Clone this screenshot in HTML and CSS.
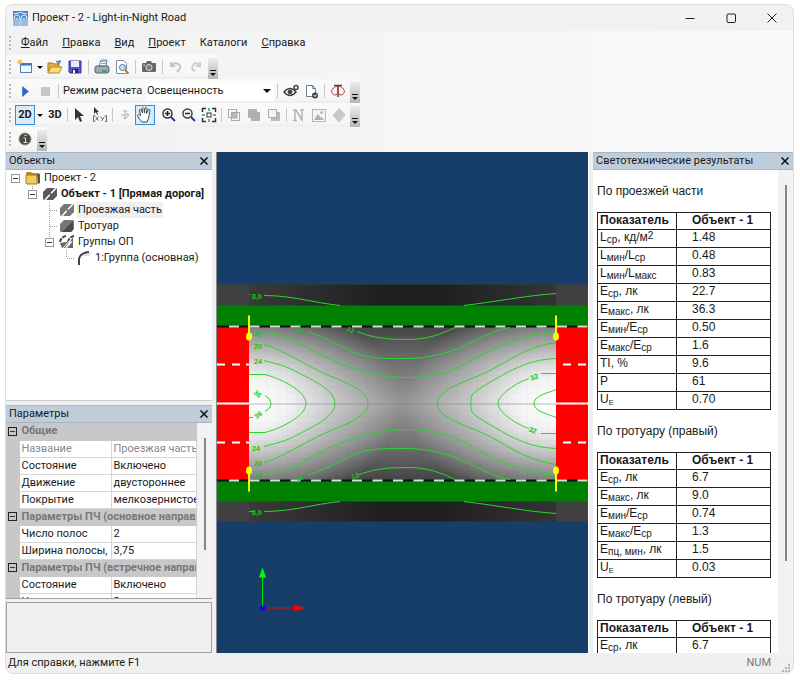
FILE: index.html
```html
<!DOCTYPE html>
<html lang="ru">
<head>
  <meta charset="UTF-8">
  <meta name="viewport" content="width=device-width, initial-scale=1.0">
  <title>Проект - 2 - Light-in-Night Road</title>
  <link rel="stylesheet" href="styles.css">
</head>
<body>
  <div class="window">
    <header class="titlebar">
      <svg class="app-icon" width="15" height="15" viewBox="0 0 15 15"><rect width="15" height="15" fill="#4d86c6"/><path d="M1 15V8q0-4 3-4t3 4v7M3 15V9q0-2 1-2t1 2v6M8 15V8q0-4 3-4t3 4v7M10 15V9q0-2 1-2t1 2v6M1 3q6-3 13 0" fill="none" stroke="#e8f2ff"/></svg>
      <span class="title">Проект - 2 - Light-in-Night Road</span>
      <button class="win-btn" aria-label="Свернуть"><svg width="12" height="12" viewBox="0 0 12 12"><path d="M1.500 6.500h9"/></svg></button>
      <button class="win-btn" aria-label="Развернуть"><svg width="12" height="12" viewBox="0 0 12 12"><rect x="2" y="2" width="8.500" height="8.500" rx="1"/></svg></button>
      <button class="win-btn" aria-label="Закрыть"><svg width="12" height="12" viewBox="0 0 12 12"><path d="M1.500 1.500l9 9M10.500 1.500l-9 9"/></svg></button>
    </header>

    <nav class="menubar">
      <span class="grip"></span>
      <button><u>Ф</u>айл</button>
      <button><u>П</u>равка</button>
      <button><u>В</u>ид</button>
      <button><u>П</u>роект</button>
      <button>Каталоги</button>
      <button><u>С</u>правка</button>
    </nav>

    <div class="toolbars">
      <div class="toolbar">
        <span class="grip"></span>
        <button class="tool" aria-label="Создать"><svg width="16" height="16" viewBox="0 0 16 16"><rect x="3.500" y="4.500" width="11" height="9" fill="#eef5fc" stroke="#4a7fb5"/><path d="M3 5.500h12" stroke="#3a75b8" stroke-width="2"/><path d="M3 0v6M0 3h6M1 1l4 4M5 1L1 5" stroke="#f0bd2c"/></svg></button>
        <button class="drop" aria-label="Варианты создания"></button>
        <button class="tool" aria-label="Открыть"><svg width="16" height="16" viewBox="0 0 16 16"><path d="M1 14V4h5l1 1h5v3" fill="#e0b040" stroke="#a87b1c"/><path d="M1 14l3-6h11l-3 6z" fill="#fbdc77" stroke="#b58a24"/><path d="M9 3q2-2 4 0M13 1v3h-3" fill="none" stroke="#2d5e98"/></svg></button>
        <button class="tool" aria-label="Сохранить"><svg width="16" height="16" viewBox="0 0 16 16"><path d="M2 2h12v12H3l-1-1z" fill="#5557c5" stroke="#3838a0"/><rect x="4" y="2" width="8" height="6" fill="#e6ecfb"/><rect x="5" y="10" width="6" height="4" fill="#23237c"/><rect x="6" y="11" width="2" height="3" fill="#fff"/></svg></button>
        <span class="sep"></span>
        <button class="tool" aria-label="Печать"><svg width="16" height="16" viewBox="0 0 16 16"><path d="M5 7l2-6h6l-1 6z" fill="#fff" stroke="#5c83a8"/><path d="M2 7h12l1 2v4l-2 1H2l-1-1V9z" fill="#9ba9b8" stroke="#536578"/><path d="M7 2.500h5M7 4.500h5" stroke="#87a9c8"/><path d="M8 11h5v2H8z" fill="#35b045"/></svg></button>
        <button class="tool" aria-label="Просмотр"><svg width="16" height="16" viewBox="0 0 16 16"><path d="M2.500 1.500h7l3 3v10h-10z" fill="#fff" stroke="#7690a8"/><circle cx="8.500" cy="8.500" r="3" fill="#c4e3f7" stroke="#55768f"/><path d="M11 11l3.500 3.500" stroke="#c07a2f" stroke-width="2"/></svg></button>
        <span class="sep"></span>
        <button class="tool" aria-label="Снимок"><svg width="16" height="16" viewBox="0 0 16 16"><path d="M1 5q0-1 1-1h3l1-2h4l1 2h3q1 0 1 1v7q0 1-1 1H2q-1 0-1-1z" fill="#666"/><circle cx="8" cy="8.500" r="3" fill="#777" stroke="#ddd"/><path d="M2.500 6h1.500" stroke="#eee"/></svg></button>
        <span class="sep"></span>
        <button class="tool" aria-label="Отменить" disabled><svg width="16" height="16" viewBox="0 0 16 16" fill="none" stroke="#c4c4c4" stroke-width="2"><path d="M3 3v4h4M3 7q3-4 7-2t1 6l-2 2"/></svg></button>
        <button class="tool" aria-label="Вернуть" disabled><svg width="16" height="16" viewBox="0 0 16 16" fill="none" stroke="#cecece" stroke-width="2"><path d="M12 3v4H8M12 7q-3-4-6-2t-1 6l2 1"/></svg></button>
        <button class="overflow" aria-label="Ещё"></button>
      </div>

      <div class="toolbar">
        <span class="grip"></span>
        <button class="tool" aria-label="Рассчитать"><svg width="16" height="16" viewBox="0 0 16 16"><path d="M5.500 3.500l6 5-6 5z" fill="#2867d8" stroke="#1c4ca8" stroke-width=".5"/></svg></button>
        <button class="tool" aria-label="Остановить" disabled><svg width="16" height="16" viewBox="0 0 16 16"><rect x="4" y="4" width="9" height="9" fill="#c6c6c6"/></svg></button>
        <span class="sep"></span>
        <label class="mode-label" for="mode">Режим расчета</label>
        <span class="combo">
          <select id="mode"><option>Освещенность</option></select>
        </span>
        <span class="sep"></span>
        <button class="tool" aria-label="Видимость"><svg width="16" height="16" viewBox="0 0 16 16" fill="none" stroke="#444"><path d="M1 9q6-7 12 0-6 7-12 0z" stroke-width="1.500"/><circle cx="7" cy="9" r="2" fill="#444"/><circle cx="13" cy="4.500" r="2" stroke-width="1.500"/></svg></button>
        <button class="tool" aria-label="Отчёт"><svg width="16" height="16" viewBox="0 0 16 16"><path d="M3.500 2.500h6l3 3v8h-9z" fill="#fff" stroke="#6c7f8f"/><path d="M9.500 2.500v3h3" fill="none" stroke="#6c7f8f"/><circle cx="12" cy="12.500" r="3" fill="#444"/><path d="M10.500 12l1.500 1.500 1.500-2" fill="none" stroke="#fff"/></svg></button>
        <span class="sep"></span>
        <button class="tool" aria-label="Кривая силы света"><svg width="16" height="16" viewBox="0 0 16 16" fill="none"><path d="M4 2.500h8M8 2v12" stroke="#444" stroke-width="1.500"/><path d="M8 3Q2 4 1.500 9q2 4 4.500 3t2-9zq6 1 6.500 6-2 4-4.500 3T8 3z" stroke="#b04848"/></svg></button>
        <button class="overflow" aria-label="Ещё"></button>
      </div>

      <div class="toolbar toolbar-tight">
        <span class="grip"></span>
        <button class="tool tool-text active">2D</button>
        <button class="drop" aria-label="Виды 2D"></button>
        <button class="tool tool-text">3D</button>
        <span class="sep"></span>
        <button class="tool" aria-label="Выбор"><svg width="16" height="16" viewBox="0 0 16 16"><path d="M3 1v12l3-3 2 5 2-1-2-5h4z" fill="#333"/></svg></button>
        <button class="tool" aria-label="Координаты"><svg width="16" height="16" viewBox="0 0 16 16"><path d="M2 0v7l2-2 1 3 1-1-1-2h2z" fill="#333"/><path d="M3 8.500H1.500v6H3M13 8.500h1.500v6H13M3.500 9.500l3 4M6.500 9.500l-3 4M8.500 9.500l2 2.500M12.500 9.500l-3 4.500" fill="none" stroke="#666"/></svg></button>
        <span class="sep"></span>
        <button class="tool" aria-label="Переместить" disabled><svg width="16" height="16" viewBox="0 0 16 16" fill="none" stroke="#b5b5b5"><path d="M8 3v9M6 5l2-2 2 2M6 10l2 2 2-2M4 8h8M10 6l2 2-2 2"/></svg></button>
        <button class="tool active" aria-label="Рука"><svg width="18" height="18" viewBox="0 0 18 18"><path d="M6 16Q3 13 1.500 9.500q1-2 3 0L3.500 4q1-2 2 0L6.500 7 6 2.500q1-2 2 0L8.500 7l.5-5q1.500-1 2 .5L10.500 7.500l2-4q1.500-.5 1.500 1-1 5-1.500 8L11 16z" fill="#fff" stroke="#444"/></svg></button>
        <span class="space"></span>
        <button class="tool" aria-label="Увеличить"><svg width="16" height="16" viewBox="0 0 16 16" fill="none"><circle cx="6.500" cy="6.500" r="4.500" stroke="#333" stroke-width="1.500"/><path d="M4 6.500h5M6.500 4v5" stroke="#222" stroke-width="1.500"/><path d="M10 10l4 4" stroke="#35358a" stroke-width="2"/></svg></button>
        <button class="tool" aria-label="Уменьшить"><svg width="16" height="16" viewBox="0 0 16 16" fill="none"><circle cx="6.500" cy="6.500" r="4.500" stroke="#444" stroke-width="1.500"/><path d="M4 6.500h5" stroke="#222" stroke-width="1.500"/><path d="M10 10l4 4" stroke="#35358a" stroke-width="2"/></svg></button>
        <button class="tool" aria-label="Показать всё"><svg width="16" height="16" viewBox="0 0 16 16" fill="none"><path d="M1.500 5V1.500H5M11 1.500h3.500V5M14.500 11v3.500H11M5 14.500H1.500V11" stroke="#333" stroke-width="1.500"/><rect x="6" y="6" width="4" height="4" stroke="#333"/><path d="M8 1v3M8 12v3M1 8h3M12 8h3" stroke="#2b9576" stroke-width="1.500"/></svg></button>
        <span class="sep"></span>
        <button class="tool" aria-label="Пересечение" disabled><svg width="16" height="16" viewBox="0 0 16 16" fill="none" stroke="#aaa"><rect x="2.500" y="2.500" width="8" height="8"/><rect x="5.500" y="5.500" width="8" height="8"/><path d="M6 6h5v5H6z" fill="#bbb"/></svg></button>
        <button class="tool" aria-label="Объединение" disabled><svg width="16" height="16" viewBox="0 0 16 16"><path d="M2 2h9v3h3v9H5v-3H2z" fill="#b0b0b0"/></svg></button>
        <button class="tool" aria-label="Вычитание" disabled><svg width="16" height="16" viewBox="0 0 16 16"><path d="M5 5h9v9H5z" fill="#bbb"/><path d="M2.500 2.500h8v8h-8z" fill="#f4f4f4" stroke="#aaa"/></svg></button>
        <span class="sep"></span>
        <button class="tool" aria-label="Север" disabled><svg width="16" height="16" viewBox="0 0 16 16" fill="none" stroke="#b4b4b4" stroke-width="1.500"><path d="M2 3h3l6 10V3M4 3v10M2 13.500h4M9 3h4"/></svg></button>
        <button class="tool" aria-label="Изображение" disabled><svg width="16" height="16" viewBox="0 0 16 16"><rect x="1.500" y="2.500" width="13" height="12" fill="#f4f4f4" stroke="#b8b8b8"/><path d="M3 13l4-6 3 4 1-1 2 3z" fill="#b0b0b0"/><circle cx="10.500" cy="5.500" r="1.500" fill="#bbb"/></svg></button>
        <button class="tool" aria-label="Слои" disabled><svg width="16" height="16" viewBox="0 0 16 16"><path d="M8 1l6 6-6 7-6-6z" fill="#c8c8c8"/><path d="M2 8l6 7 6-7" fill="none" stroke="#b4b4b4"/></svg></button>
        <button class="overflow" aria-label="Ещё"></button>
      </div>

      <div class="toolbar">
        <span class="grip"></span>
        <button class="tool" aria-label="Сведения"><svg width="16" height="16" viewBox="0 0 16 16"><circle cx="8" cy="8" r="6" fill="#4a4a45" stroke="#8c8c84"/><path d="M6.500 7h2v4M6.500 11.500h4M7.500 4.500h2" fill="none" stroke="#e0e0d0"/></svg></button>
        <button class="overflow" aria-label="Ещё"></button>
      </div>
    </div>

    <main class="workspace">
      <aside class="left">
        <section class="panel objects">
          <h2 class="panel-head">Объекты <button class="close" aria-label="Закрыть"><svg width="10" height="10" viewBox="0 0 10 10"><path d="M1.500 1.500l7 7M8.500 1.500l-7 7"/></svg></button></h2>
          <ul class="tree">
            <li>
              <div class="node"><button class="expander" aria-label="Свернуть"></button><svg width="16" height="16" viewBox="0 0 16 16"><path d="M1 3l1-1h4l1 1h7v2H1z" fill="#b98b25"/><path d="M1 5h11v9H2l-1-1z" fill="#f2cd5c" stroke="#a3781c"/><path d="M12 4h3v9l-2 1z" fill="#555"/></svg><span>Проект - 2</span></div>
              <ul>
                <li>
                  <div class="node"><button class="expander" aria-label="Свернуть"></button><svg width="16" height="16" viewBox="0 0 16 16"><path d="M1 6l4-4h9l1 1v7l-4 4H2l-1-1z" fill="#5a5a5a"/><path d="M3 14L14 2" stroke="#fff" stroke-width="1.500" stroke-dasharray="7 2"/></svg><span><b>Объект - 1 [Прямая дорога]</b></span></div>
                  <ul>
                    <li><div class="node"><i class="stub"></i><svg width="16" height="16" viewBox="0 0 16 16"><path d="M1 6l4-4h9l1 1v7l-4 4H2l-1-1z" fill="#777"/><path d="M3 14L14 2" stroke="#fff" stroke-width="1.500" stroke-dasharray="7 2"/></svg><span class="selected">Проезжая часть</span></div></li>
                    <li><div class="node"><i class="stub"></i><svg width="16" height="16" viewBox="0 0 16 16"><path d="M1 6l4-4h9l1 1v8l-3 3H2l-1-1z" fill="#777"/><path d="M3 14L14 3v9l-2 2z" fill="#4a4a4a"/></svg><span>Тротуар</span></div></li>
                    <li>
                      <div class="node"><button class="expander" aria-label="Свернуть"></button><svg width="16" height="16" viewBox="0 0 16 16"><path d="M1 9l2 5h3L14 3v11H8l6-7" fill="#666"/><path d="M1 8q1-5 6-6M9 8q1-5 6-6" fill="none" stroke="#444" stroke-width="2" stroke-dasharray="4 1"/><path d="M4 14L13 4" stroke="#fff"/></svg><span>Группы ОП</span></div>
                      <ul>
                        <li><div class="node"><i class="stub"></i><svg width="16" height="16" viewBox="0 0 16 16"><path d="M3 15V9q1-6 10-7" fill="none" stroke="#444" stroke-width="2"/><path d="M7 5q5-2 8-2l-2 3H8z" fill="#cfdcf2"/></svg><span>1:Группа (основная)</span></div></li>
                      </ul>
                    </li>
                  </ul>
                </li>
              </ul>
            </li>
          </ul>
        </section>

        <section class="panel params">
          <h2 class="panel-head">Параметры <button class="close" aria-label="Закрыть"><svg width="10" height="10" viewBox="0 0 10 10"><path d="M1.500 1.500l7 7M8.500 1.500l-7 7"/></svg></button></h2>
          <div class="props-box">
            <table class="props">
              <colgroup><col class="gutter"><col class="prop-name"><col></colgroup>
              <tbody>
                <tr class="group"><td><button class="expander" aria-label="Свернуть"></button></td><th colspan="2">Общие</th></tr>
                <tr class="muted"><td></td><td>Название</td><td>Проезжая часть</td></tr>
                <tr><td></td><td>Состояние</td><td>Включено</td></tr>
                <tr><td></td><td>Движение</td><td>двустороннее</td></tr>
                <tr><td></td><td>Покрытие</td><td>мелкозернистое</td></tr>
                <tr class="group"><td><button class="expander" aria-label="Свернуть"></button></td><th colspan="2">Параметры ПЧ (основное направ.</th></tr>
                <tr><td></td><td>Число полос</td><td>2</td></tr>
                <tr><td></td><td>Ширина полосы,</td><td>3,75</td></tr>
                <tr class="group"><td><button class="expander" aria-label="Свернуть"></button></td><th colspan="2">Параметры ПЧ (встречное направ</th></tr>
                <tr><td></td><td>Состояние</td><td>Включено</td></tr>
                <tr><td></td><td>Число полос</td><td>2</td></tr>
              </tbody>
            </table>
            <div class="scroll props-scroll"><span></span></div>
          </div>
          <div class="hint"></div>
        </section>
      </aside>

      <section class="canvas">
        <svg class="scene" viewBox="0 -1 371 502" preserveAspectRatio="xMidYMid slice">
          <defs>
            <linearGradient id="road" x1="0" y1="0" x2="0" y2="1">
              <stop offset="0" stop-color="#444"/><stop offset=".25" stop-color="#747474"/><stop offset=".5" stop-color="#989898"/><stop offset=".75" stop-color="#747474"/><stop offset="1" stop-color="#444"/>
            </linearGradient>
            <radialGradient id="glow">
              <stop offset="0" stop-color="#fff"/><stop offset=".25" stop-color="#fff" stop-opacity=".9"/><stop offset=".6" stop-color="#fff" stop-opacity=".45"/><stop offset="1" stop-color="#fff" stop-opacity="0"/>
            </radialGradient>
            <linearGradient id="walk">
              <stop offset="0" stop-color="#3a3a3a"/><stop offset=".45" stop-color="#1e1e1e"/><stop offset=".6" stop-color="#1e1e1e"/><stop offset="1" stop-color="#343434"/>
            </linearGradient>
            <clipPath id="road-clip"><rect x="32" y="174" width="307" height="154"/></clipPath>
            <pattern id="cells" width="10" height="6" patternUnits="userSpaceOnUse"><path d="M0 .5h10M.5 0v6" stroke="#000" stroke-opacity=".02"/></pattern>
            <g id="isolines">
              <path d="M47 143C75 143 95 150 123 153M247 153C280 149 310 143 339 141"/>
              <path d="M140 179C155 185 168 187 190 187S225 181 238 175"/>
              <path d="M90 179C110 186 118 191 135 199S170 206 190 206S232 201 250 192S280 177 293 175"/>
              <path d="M48 180C75 183 85 193 105 203S155 225 190 225S240 216 260 205S310 181 339 179"/>
              <path d="M47 192C65 197 88 212 105 220S151 236 151 251"/>
              <path d="M339 190C310 194 290 209 273 218S220 236 220 251"/>
              <path d="M47 208C62 212 68 213 81 220S118 237 118 251"/>
              <path d="M339 206C315 207 300 214 276 228S254 242 254 251"/>
              <path d="M32 222H48C60 225 89 237 89 251"/>
              <path d="M339 221H324M312 226C300 230 281 242 281 251"/>
              <path d="M48 243Q54 246 54 251M339 237C330 241 317 243 317 251"/>
            </g>
            <g id="lamp"><path d="M0 0v21" stroke="#ff0" stroke-width="2"/><ellipse cy="21" rx="3" ry="4" fill="#ff0"/></g>
          </defs>
          <rect y="132" width="371" height="237" fill="#404040"/>
          <rect x="32" y="132" width="307" height="237" fill="url(#walk)"/>
          <rect y="153" width="371" height="196" fill="#008000"/>
          <rect y="174" width="371" height="154" fill="#f00"/>
          <g clip-path="url(#road-clip)">
            <rect x="32" y="174" width="307" height="154" fill="url(#road)"/>
            <ellipse cx="32" cy="251" rx="150" ry="105" fill="url(#glow)"/>
            <ellipse cx="339" cy="251" rx="150" ry="105" fill="url(#glow)"/>
            <rect x="32" y="174" width="307" height="154" fill="url(#cells)"/>
            <path d="M32 251.500h307" stroke="#777" stroke-opacity=".5"/>
          </g>
          <path d="M0 174h371M0 328h371" stroke="#111" stroke-width="2"/>
          <path d="M12 174h359M12 328h359" stroke="#ddd" stroke-width="2" stroke-dasharray="10 10.500"/>
          <path d="M0 251h32M339 251h32M0 212h8M15 212h8M29 212h3M0 290h8M15 290h8M29 290h3M346 212h8M361 212h8M346 290h8M361 290h8" stroke="#fff" stroke-width="2"/>
          <g fill="none" stroke="#2bd52b">
            <use href="#isolines"/>
            <use href="#isolines" transform="matrix(1 0 0 -1 0 502)"/>
            <path d="M32 359h5M32 142h1M32 265h4"/>
          </g>
          <g class="iso-labels">
            <text x="35" y="146">8,0</text>
            <text x="35" y="362">8,0</text>
            <text x="37" y="184" transform="rotate(20 41 181)">16</text>
            <text x="37" y="196">20</text>
            <text x="37" y="211">24</text>
            <text x="37" y="244" transform="rotate(40 41 241)">36</text>
            <text x="37" y="265" transform="rotate(-40 41 262)">36</text>
            <text x="35" y="298">24</text>
            <text x="37" y="313">20</text>
            <text x="37" y="325">16</text>
            <text x="79" y="180" transform="rotate(30 83 177)">14</text>
            <text x="78" y="329" transform="rotate(-30 82 326)">14</text>
            <text x="130" y="180" transform="rotate(30 134 177)">12</text>
            <text x="134" y="326" transform="rotate(-20 138 323)">12</text>
            <text x="313" y="227" transform="rotate(-20 317 224)">32</text>
            <text x="312" y="280" transform="rotate(20 315 277)">32</text>
          </g>
          <use href="#lamp" x="32" y="163"/>
          <use href="#lamp" x="339" y="163"/>
          <use href="#lamp" transform="matrix(1 0 0 -1 32 339)"/>
          <use href="#lamp" transform="matrix(1 0 0 -1 339 339)"/>
          <!-- coordinate axes -->
          <path d="M45.500 456v-32" stroke="#0d0"/><path d="M42 425l3.500-10 3.500 10z" fill="#0f0"/>
          <path d="M46 455.500h32" stroke="#e00"/><path d="M77 452l11 3.500-11 3.500z" fill="#f00"/>
          <circle cx="45.500" cy="455.500" r="2.500" fill="#00f"/>
        </svg>
      </section>

      <section class="panel results">
        <h2 class="panel-head">Светотехнические результаты <button class="close" aria-label="Закрыть"><svg width="10" height="10" viewBox="0 0 10 10"><path d="M1.500 1.500l7 7M8.500 1.500l-7 7"/></svg></button></h2>
        <div class="results-body">
          <div class="report">
            <h3>По проезжей части</h3>
            <table>
              <tr><th>Показатель</th><th>Объект - 1</th></tr>
              <tr><td>L<sub>ср</sub>, кд/м<sup>2</sup></td><td>1.48</td></tr>
              <tr><td>L<sub>мин</sub>/L<sub>ср</sub></td><td>0.48</td></tr>
              <tr><td>L<sub>мин</sub>/L<sub>макс</sub></td><td>0.83</td></tr>
              <tr><td>E<sub>ср</sub>, лк</td><td>22.7</td></tr>
              <tr><td>E<sub>макс</sub>, лк</td><td>36.3</td></tr>
              <tr><td>E<sub>мин</sub>/E<sub>ср</sub></td><td>0.50</td></tr>
              <tr><td>E<sub>макс</sub>/E<sub>ср</sub></td><td>1.6</td></tr>
              <tr><td>TI, %</td><td>9.6</td></tr>
              <tr><td>P</td><td>61</td></tr>
              <tr><td>U<sub class="small">E</sub></td><td>0.70</td></tr>
            </table>
            <h3>По тротуару (правый)</h3>
            <table>
              <tr><th>Показатель</th><th>Объект - 1</th></tr>
              <tr><td>E<sub>ср</sub>, лк</td><td>6.7</td></tr>
              <tr><td>E<sub>макс</sub>, лк</td><td>9.0</td></tr>
              <tr><td>E<sub>мин</sub>/E<sub>ср</sub></td><td>0.74</td></tr>
              <tr><td>E<sub>макс</sub>/E<sub>ср</sub></td><td>1.3</td></tr>
              <tr><td>E<sub>пц, мин</sub>, лк</td><td>1.5</td></tr>
              <tr><td>U<sub class="small">E</sub></td><td>0.03</td></tr>
            </table>
            <h3>По тротуару (левый)</h3>
            <table>
              <tr><th>Показатель</th><th>Объект - 1</th></tr>
              <tr><td>E<sub>ср</sub>, лк</td><td>6.7</td></tr>
              <tr><td>E<sub>макс</sub>, лк</td><td>9.0</td></tr>
            </table>
          </div>
          <div class="scroll results-scroll"><span></span></div>
        </div>
      </section>
    </main>

    <footer class="statusbar">
      <span>Для справки, нажмите F1</span>
      <span class="num">NUM</span>
      <svg width="10" height="10" viewBox="0 0 10 10" fill="#b0b0b0"><path d="M7 1h2v2H7zM4 4h2v2H4zM7 4h2v2H7zM1 7h2v2H1zM4 7h2v2H4zM7 7h2v2H7z"/></svg>
    </footer>
  </div>
</body>
</html>
```

FILE: styles.css
```css
* {
  box-sizing: border-box;
}
body {
  margin: 0;
  height: 100vh;
  padding: 4px 6px 8px 5px;
  background: #fff;
  color: #1a1a1a;
  font: 11px/16px Roboto, "Noto Sans", sans-serif;
}
button {
  padding: 0;
  border: 0;
  background: none;
  color: inherit;
  font: inherit;
}
h2, h3 {
  margin: 0;
  font: inherit;
}
ul {
  margin: 0;
  padding: 0;
  list-style: none;
}
svg {
  display: block;
}
.window {
  display: flex;
  flex-direction: column;
  height: 100%;
  border: 1px solid #dedede;
  border-radius: 8px;
  background: #f0f0f0;
  overflow: hidden;
}

/* title and menu */
.titlebar {
  display: flex;
  align-items: center;
  height: 26px;
  padding: 0 1px 0 7px;
  background: #f2f2f2;
}
.title {
  flex: 1;
  padding-left: 4px;
}
.win-btn {
  display: grid;
  place-items: center;
  width: 41px;
  height: 26px;
}
.win-btn svg {
  fill: none;
  stroke: #222;
}
.menubar, .toolbars {
  background: linear-gradient(90deg, #f1f1f1, #fafafa);
}
.menubar {
  display: flex;
  align-items: center;
  height: 24px;
}
.menubar button {
  padding: 0 7px;
}
.menubar .grip {
  margin-right: -1px;
}
.grip {
  width: 9px;
  height: 15px;
  background: repeating-linear-gradient(#b8b8b8 0 2px, transparent 2px 4px) 3px 0 / 2px 100% no-repeat;
}

/* toolbars */
.toolbars {
  height: 97px;
}
.toolbar {
  display: flex;
  align-items: center;
  width: max-content;
  height: 24px;
  background: linear-gradient(#fafafa, #f6f6f6 80%, #eee);
  border-radius: 3px;
}
.tool {
  display: grid;
  place-items: center;
  width: 20px;
  height: 20px;
}
.tool-text {
  font-weight: bold;
}
.tool.active {
  border: 1px solid #2f8fdc;
  background: #d9ebf9;
}
.drop {
  width: 10px;
  height: 20px;
}
.drop::after, .combo::after {
  content: "";
  display: block;
  width: 0;
  margin: auto;
  border: 3px solid transparent;
  border-top-color: #111;
  border-bottom: 0;
}
.sep {
  width: 1px;
  height: 14px;
  margin: 0 3px;
  background: #c8c8c8;
}
.toolbar-tight .sep {
  margin: 0 2px;
}
.space {
  width: 4px;
}
.overflow {
  align-self: flex-end;
  width: 10px;
  height: 21px;
  margin-left: 2px;
  padding-top: 9px;
  background: linear-gradient(#ececec, #b5b5b5);
}
.toolbar-tight .overflow {
  margin-left: 1px;
}
.overflow::before {
  content: "";
  display: block;
  width: 6px;
  height: 1px;
  margin: 0 auto 2px;
  background: #111;
}
.overflow::after {
  content: "";
  display: block;
  width: 0;
  margin: auto;
  border: 3px solid transparent;
  border-top-color: #111;
  border-bottom: 0;
}
.mode-label {
  width: 78px;
  padding-left: 1px;
  white-space: nowrap;
}
.combo {
  display: grid;
  align-items: center;
  width: 134px;
  padding-left: 6px;
}
.combo select, .combo::after {
  grid-area: 1 / 1;
}
.combo::after {
  margin: 0 3px 0 auto;
  border-width: 4px 4px 0;
}
.combo select {
  appearance: none;
  height: 20px;
  padding: 0 1px;
  border: 0;
  background: #fff;
  color: inherit;
  font: inherit;
}

/* work area */
.workspace {
  flex: 1;
  min-height: 0;
  display: grid;
  grid-template-columns: 206px 1fr 200px;
  grid-template-rows: 100%;
  column-gap: 4px;
}
.left {
  display: grid;
  grid-template-columns: 100%;
  grid-template-rows: 1fr 248px;
  row-gap: 4px;
  min-height: 0;
}
.panel {
  display: flex;
  flex-direction: column;
  min-height: 0;
  background: #fff;
}
.panel-head {
  display: flex;
  align-items: center;
  justify-content: space-between;
  height: 18px;
  flex: none;
  padding: 0 3px;
  background: #bfcddb;
  border: 1px solid #a9b5c1;
  border-width: 1px 0;
  white-space: nowrap;
}
.close svg {
  stroke: #111;
  stroke-width: 1.5;
}
.objects {
  border-bottom: 1px solid #ccc;
}

.tree {
  padding-left: 1px;
}
.tree ul {
  padding-left: 17px;
  background: repeating-linear-gradient(#999 0 1px, transparent 1px 2px) 25px 0 / 1px calc(100% - 8px) no-repeat;
}
.tree > li > ul {
  background-size: 1px 4px;
}
.tree > li > ul > li > ul {
  background-size: 1px 36px;
}
.node {
  display: flex;
  align-items: center;
  height: 16px;
  white-space: nowrap;
}
.node svg {
  margin: 0 2px 0 1px;
}
.node span {
  padding: 0 1px;
}
.selected {
  background: #f0f0f0;
}
.expander {
  display: grid;
  place-items: center;
  width: 9px;
  height: 9px;
  border: 1px solid #999;
  background: #fff;
}
.expander::before {
  content: "";
  width: 5px;
  height: 1px;
  background: #334;
}
.node .expander {
  margin: 0 4px;
}
.stub {
  width: 8px;
  height: 1px;
  margin-left: 9px;
  background: repeating-linear-gradient(90deg, #999 0 1px, transparent 1px 2px);
}

/* property grid */
.params {
  background: #f0f0f0;
}
.props-box {
  display: flex;
  height: 176px;
  border-bottom: 1px solid #a0a0a0;
  overflow: hidden;
}
.props {
  flex: 1;
  table-layout: fixed;
  width: 190px;
  height: max-content;
  border-collapse: collapse;
}
.gutter {
  width: 13px;
}
.prop-name {
  width: 92px;
}
.props td, .props th {
  height: 17px;
  padding: 0 2px;
  border: 1px solid #d6d6d6;
  border-width: 0 1px 1px 0;
  background: #fff;
  line-height: 16px;
  text-align: left;
  white-space: nowrap;
  overflow: hidden;
}
.props td:first-child, .props .group td, .props .group th {
  border-color: #c8c8c8;
  background: #c8c8c8;
}
.props th {
  color: #777;
}
.props .muted {
  color: #888;
}
.props .expander {
  border-color: #222;
  background: #c8c8c8;
}
.scroll {
  width: 15px;
  flex: none;
  background: #f2f2f2;
}
.scroll span {
  display: block;
  width: 2px;
  margin: 15px auto 0;
  background: #858585;
}
.props-scroll span {
  height: 112px;
}
.results-scroll span {
  height: 376px;
}
.hint {
  flex: 1;
  margin-top: 3px;
  border: 1px solid #a0a0a0;
}

/* drawing */
.canvas {
  min-width: 0;
  min-height: 0;
  border: 1px solid #fff;
  border-width: 0 1px;
  border-left-color: #888;
  background: #163e68;
}
.scene {
  width: 100%;
  height: 100%;
}
.iso-labels {
  fill: #10c810;
  font: bold 7px "Liberation Sans", sans-serif;
}

/* results */
.results-body {
  display: flex;
  flex: 1;
  min-height: 0;
}
.report {
  flex: 1;
  padding-left: 4px;
  overflow: hidden;
  font: 12px/16px "Liberation Sans", Arial, sans-serif;
}
.report h3 {
  padding: 13px 0;
}
.report table {
  width: 174px;
  border-collapse: collapse;
}
.report th, .report td {
  height: 18px;
  padding: 0 2px;
  border: 1px solid #222;
  line-height: 14px;
  white-space: nowrap;
  vertical-align: top;
}
.report th {
  height: 17px;
  text-align: left;
}
.report th:first-child {
  width: 79px;
}
.report th + th, .report td + td {
  padding-left: 15px;
}
.report sub, .report sup {
  font-size: 10px;
  line-height: 0;
}
.report sub {
  vertical-align: -2px;
}
.report sup {
  vertical-align: 2px;
}
.report .small {
  font-size: 7px;
}

.statusbar {
  display: flex;
  align-items: center;
  height: 20px;
  padding: 0 2px;
}
.num {
  margin-left: auto;
  padding-right: 10px;
  color: #777;
}
.statusbar svg {
  align-self: flex-end;
}
```
